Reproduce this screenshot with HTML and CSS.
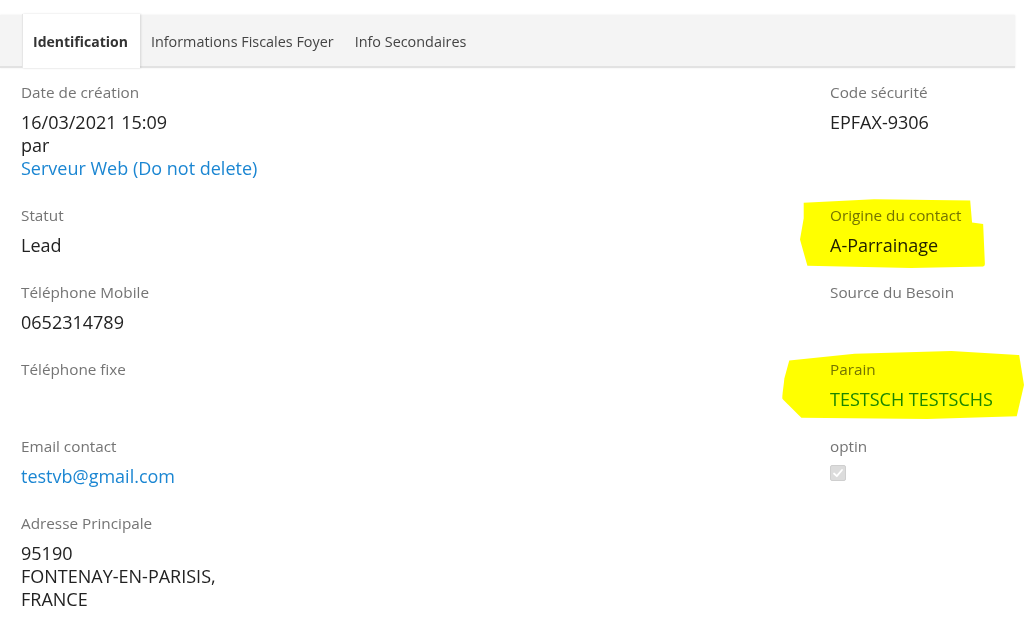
FILE: index.html
```html
<!DOCTYPE html>
<html lang="fr">
<head>
  <meta charset="UTF-8" />
  <meta name="viewport" content="width=device-width, initial-scale=1" />
  <title>Identification</title>
  <link rel="stylesheet" href="styles.css">
</head>
<body>
  <div class="tabs">
    <div class="tab-spacer"></div>
    <div class="tab active">Identification</div>
    <div class="tab">Informations Fiscales Foyer</div>
    <div class="tab">Info Secondaires</div>
  </div>

  <div class="fields">
    <div class="field">
      <div class="label">Date de création</div>
      <div class="value">16/03/2021 15:09<br>par<br><a class="link" href="#">Serveur Web (Do not delete)</a></div>
    </div>
    <div class="field">
      <div class="label">Code sécurité</div>
      <div class="value">EPFAX-9306</div>
    </div>

    <div class="field">
      <div class="label">Statut</div>
      <div class="value">Lead</div>
    </div>
    <div class="field">
      <div class="label">Origine du contact</div>
      <div class="value">A-Parrainage</div>
      <div class="highlight highlight-origin"></div>
    </div>

    <div class="field">
      <div class="label">Téléphone Mobile</div>
      <div class="value">0652314789</div>
    </div>
    <div class="field">
      <div class="label">Source du Besoin</div>
      <div class="value"></div>
    </div>

    <div class="field">
      <div class="label">Téléphone fixe</div>
      <div class="value"></div>
    </div>
    <div class="field">
      <div class="label">Parain</div>
      <div class="value"><a class="link" href="#">TESTSCH TESTSCHS</a></div>
      <div class="highlight highlight-parrain"></div>
    </div>

    <div class="field">
      <div class="label">Email contact</div>
      <div class="value"><a class="link" href="#">testvb@gmail.com</a></div>
    </div>
    <div class="field">
      <div class="label">optin</div>
      <div class="value">
        <span class="checkbox">
          <svg width="12" height="12" viewBox="0 0 12 12"><path d="M2 6.5 L4.8 9.2 L10 3" fill="none" stroke="#fff" stroke-width="1.8" stroke-linecap="round" stroke-linejoin="round"/></svg>
        </span>
      </div>
    </div>

    <div class="field">
      <div class="label">Adresse Principale</div>
      <div class="value">95190<br>FONTENAY-EN-PARISIS,<br>FRANCE</div>
    </div>
    <div class="field"></div>
  </div>
</body>
</html>
```

FILE: styles.css
```css
* {
  box-sizing: border-box;
  margin: 0;
  padding: 0;
}

body {
  font-family: "Open Sans", "Noto Sans", sans-serif;
  background: #fff;
  color: #222;
  width: 1024px;
  height: 622px;
  overflow: hidden;
}

/* Tab strip */
.tabs {
  display: flex;
  align-items: stretch;
  height: 53px;
  margin-top: 15px;
  margin-right: 9px;
  background: #f4f4f4;
  border-bottom: 2px solid #e2e2e2;
  box-shadow: 0 0 2px rgba(0, 0, 0, 0.08);
}

.tab-spacer {
  width: 22px;
}

.tab {
  display: flex;
  align-items: center;
  padding: 1px 10px 0 11px;
  font-size: 14.4px;
  color: #444;
  white-space: nowrap;
}

.tab.active {
  background: #fff;
  font-weight: 700;
  font-size: 14px;
  color: #333;
  padding: 1px 12px 0 10px;
  margin-top: -1px;
  margin-bottom: -2px;
  border-left: 1px solid #e6e6e6;
  box-shadow: 1px 0 2px rgba(0, 0, 0, 0.12);
}

/* Field grid */
.fields {
  display: grid;
  grid-template-columns: 809px 1fr;
  padding: 14px 0 0 21px;
}

.field {
  position: relative;
  margin-bottom: 25px;
}

.label {
  font-size: 15.3px;
  line-height: 20px;
  color: #747474;
}

.value {
  margin-top: 9px;
  min-height: 23px;
  font-size: 18px;
  line-height: 23px;
  color: #222;
}

.link {
  color: #1b86d2;
  text-decoration: none;
}

.checkbox {
  display: inline-flex;
  align-items: center;
  justify-content: center;
  width: 16px;
  height: 16px;
  background: #dcdcdc;
  border: 1px solid #cfcfcf;
  border-radius: 2px;
  vertical-align: top;
}

/* Yellow marker strokes over the screenshot */
.highlight {
  position: absolute;
  background: #ffff00;
  mix-blend-mode: multiply;
  pointer-events: none;
}

.highlight-origin {
  left: -30px;
  top: -8px;
  width: 185px;
  height: 71px;
  border-radius: 4px 10px 6px 8px / 6px 14px 4px 10px;
  clip-path: polygon(2% 8%, 40% 3%, 92% 5%, 93% 36%, 99% 38%, 100% 98%, 60% 100%, 4% 97%, 0% 60%, 2% 30%);
}

.highlight-parrain {
  left: -48px;
  top: -8px;
  width: 242px;
  height: 68px;
  border-radius: 18px 10px 14px 22px / 14px 12px 14px 24px;
  clip-path: polygon(3% 14%, 30% 4%, 70% 0%, 98% 6%, 100% 50%, 97% 96%, 60% 100%, 8% 98%, 0% 70%, 1% 40%);
}
```
